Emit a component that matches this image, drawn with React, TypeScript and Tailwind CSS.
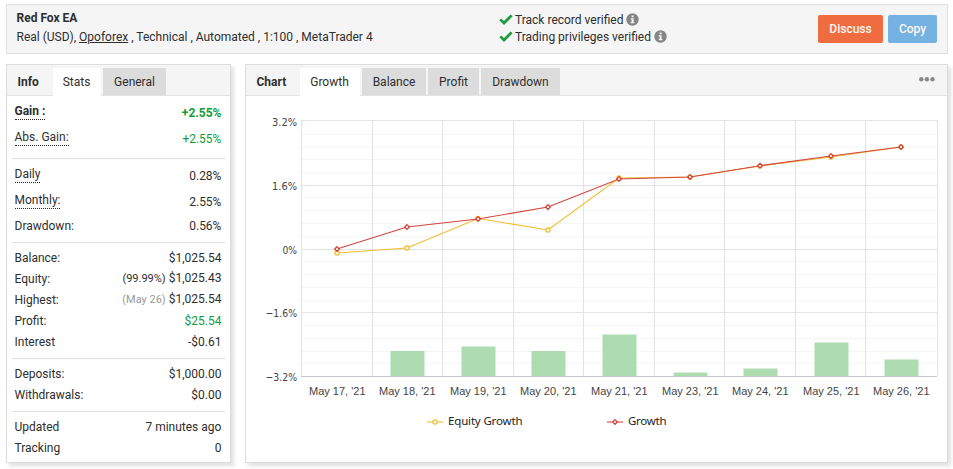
import React, { useState } from "react";
import clsx from "clsx";

interface StatRow {
  label: string;
  value: string;
  note?: string;
  noteClass?: string;
  labelClass?: string;
  valueClass?: string;
  hint?: boolean;
  height?: string;
}

interface StatGroup {
  className: string;
  rows: StatRow[];
}

const groups: StatGroup[] = [
  {
    className: "pt-1 pb-1.5",
    rows: [
      { label: "Gain :", value: "+2.55%", hint: true, height: "h-[26px]", labelClass: "font-bold", valueClass: "font-bold text-[#0f9d3a]" },
      { label: "Abs. Gain:", value: "+2.55%", hint: true, height: "h-[26px]", valueClass: "text-[#0f9d3a]" },
    ],
  },
  {
    className: "border-t pt-1 pb-[5px]",
    rows: [
      { label: "Daily", value: "0.28%", hint: true, height: "h-[26px]" },
      { label: "Monthly:", value: "2.55%", hint: true, height: "h-[26px]" },
      { label: "Drawdown:", value: "0.56%", height: "h-[22px]" },
    ],
  },
  {
    className: "border-t pt-1 pb-1.5",
    rows: [
      { label: "Balance:", value: "$1,025.54" },
      { label: "Equity:", value: "$1,025.43", note: "(99.99%)" },
      { label: "Highest:", value: "$1,025.54", note: "(May 26)", noteClass: "text-[#999]" },
      { label: "Profit:", value: "$25.54", valueClass: "text-[#0f9d3a]" },
      { label: "Interest", value: "-$0.61" },
    ],
  },
  {
    className: "border-t pt-1 pb-1.5",
    rows: [
      { label: "Deposits:", value: "$1,000.00" },
      { label: "Withdrawals:", value: "$0.00" },
    ],
  },
  {
    className: "border-t pt-1",
    rows: [
      { label: "Updated", value: "7 minutes ago" },
      { label: "Tracking", value: "0" },
    ],
  },
];

const points = [
  { date: "May 17, '21", x: 337, growth: 249, equity: 253, bar: 0 },
  { date: "May 18, '21", x: 407, growth: 227, equity: 248, bar: 351 },
  { date: "May 19, '21", x: 478, growth: 219, equity: 218.5, bar: 346.5 },
  { date: "May 20, '21", x: 548, growth: 207, equity: 230, bar: 351 },
  { date: "May 21, '21", x: 619, growth: 179, equity: 178, bar: 334.5 },
  { date: "May 23, '21", x: 690, growth: 177, equity: 177, bar: 372.5 },
  { date: "May 24, '21", x: 760, growth: 165.7, equity: 166, bar: 368.5 },
  { date: "May 25, '21", x: 831, growth: 156, equity: 157, bar: 342.5 },
  { date: "May 26, '21", x: 901, growth: 147, equity: 147, bar: 359.5 },
];

const columns = [301.5, 372.5, 442.5, 513.5, 583.5, 654.5, 724.5, 795.5, 865.5, 937.5];
const minorLines = [134.5, 147.5, 159.5, 172.5, 197.5, 210.5, 223.5, 236.5, 261.5, 274.5, 287.5, 300.5, 325.5, 338.5, 351.5, 363.5];
const majorLines = [
  { y: 120.5, label: "3.2%" },
  { y: 185.5, label: "1.6%" },
  { y: 249.5, label: "0%" },
  { y: 312.5, label: "−1.6%" },
  { y: 376.5, label: "−3.2%" },
];

function CheckMark() {
  return (
    <svg width="14" height="11" viewBox="0 0 14 11" className="mr-[2px] shrink-0">
      <path d="M1.3 5.4 L5 9 L12.6 1.4" fill="none" stroke="#1a9c3f" strokeWidth="2.7" />
    </svg>
  );
}

function InfoIcon() {
  return (
    <svg width="13" height="13" viewBox="0 0 13 13" className="ml-[3px] shrink-0">
      <circle cx="6.5" cy="6.5" r="6.2" fill="#858585" />
      <path d="M5.6 2.4h2v1.8h-2zM4.7 5.2h2.9v3.7h.8v1.3H4.7V8.9h.9V6.5h-.9z" fill="#f5f5f5" />
    </svg>
  );
}

interface TabsProps {
  title: string;
  titleClass: string;
  tabs: { name: string; width: string }[];
}

function Tabs({ title, titleClass, tabs }: TabsProps) {
  const [active, setActive] = useState<string>(tabs[0].name);

  return (
    <div className="flex h-full items-end gap-[2px]">
      <span className={clsx("h-[27px] pl-[10.5px] font-bold leading-[28px]", titleClass)}>{title}</span>
      {tabs.map((tab) => (
        <button
          key={tab.name}
          onClick={() => setActive(tab.name)}
          className={clsx(
            "text-center whitespace-nowrap",
            tab.width,
            active === tab.name
              ? "relative -mb-px h-[28px] bg-white pr-px leading-[28px]"
              : "h-[27px] bg-[#dcdcdc] leading-[28px]"
          )}
        >
          {tab.name}
        </button>
      ))}
    </div>
  );
}

function GrowthChart() {
  return (
    <svg width="701" height="365" viewBox="246 96 701 365" className="block">
      {minorLines.map((y) => (
        <path key={y} d={`M302 ${y}H937`} stroke="#f5f5f5" />
      ))}
      {majorLines.map((line) => (
        <path key={line.y} d={`M302 ${line.y}H937`} stroke="#e3e3e3" />
      ))}
      {columns.map((x) => (
        <path key={x} d={`M${x} 120V376`} stroke="#e3e3e3" />
      ))}

      {/* Bars */}
      {points.filter((p) => p.bar > 0).map((p) => (
        <rect key={p.date} x={p.x - 16.5} y={p.bar} width="34" height={376 - p.bar} fill="#addcb0" />
      ))}
      <path d="M301 376.5H937" stroke="#c4c8d0" />

      {/* Equity series */}
      <polyline points={points.map((p) => `${p.x},${p.equity}`).join(" ")} fill="none" stroke="#f1bd2e" strokeWidth="1.1" />
      {points.map((p) => (
        <circle key={p.date} cx={p.x} cy={p.equity} r="2.1" fill="#fff" stroke="#f1bd2e" strokeWidth="1.2" />
      ))}

      {/* Growth series */}
      <polyline points={points.map((p) => `${p.x},${p.growth}`).join(" ")} fill="none" stroke="#d2453f" strokeWidth="1.1" />
      {points.map((p) => (
        <path key={p.date} d={`M${p.x} ${p.growth - 2.3}l2.3 2.3l-2.3 2.3l-2.3 -2.3z`} fill="#fff" stroke="#d93a30" strokeWidth="1.2" />
      ))}

      {/* Axis labels */}
      <g fill="#444" fontSize="11" fontFamily="'DejaVu Sans', sans-serif" textAnchor="end">
        {majorLines.map((line) => (
          <text key={line.label} x="297" y={line.y + (line.y === 120.5 ? 5.5 : 4)} textLength={line.label.length === 5 ? 31.5 : line.label.length === 4 ? 25 : 14.5} lengthAdjust="spacingAndGlyphs">
            {line.label}
          </text>
        ))}
      </g>
      <g fill="#444" fontSize="11" fontFamily="'Liberation Sans', sans-serif" textAnchor="middle">
        {points.map((p) => (
          <text key={p.date} x={p.x + 0.3} y="395" textLength="56.5">{p.date}</text>
        ))}
      </g>

      {/* Legend */}
      <path d="M427 422H443" stroke="#f1bd2e" strokeWidth="1.1" />
      <circle cx="435" cy="422" r="2.1" fill="#fff" stroke="#f1bd2e" strokeWidth="1.2" />
      <path d="M607 422H623" stroke="#d2453f" strokeWidth="1.1" />
      <path d="M615 419.7l2.3 2.3l-2.3 2.3l-2.3 -2.3z" fill="#fff" stroke="#d93a30" strokeWidth="1.2" />
      <g fill="#222" fontSize="11.5" fontFamily="'Noto Sans', sans-serif">
        <text x="448" y="425" textLength="74.5">Equity Growth</text>
        <text x="628" y="425" textLength="38.5">Growth</text>
      </g>
    </svg>
  );
}

export default function App() {
  return (
    <div className="h-[469px] w-[953px] overflow-hidden bg-white pt-1 pl-1.5 font-[Roboto,sans-serif] text-[12px] text-[#2e2e2e]">
      {/* Header */}
      <header className="flex h-[50px] w-[942px] border border-[#e0e0e0] bg-[#f5f5f5]">
        <div className="w-[492px] pt-[4px] pl-[9.5px]">
          <h1 className="h-[18px] font-bold leading-[18px]">Red Fox EA</h1>
          <p className="leading-[20px] whitespace-nowrap">
            Real (USD), <a className="underline">Opoforex</a> , Technical , Automated , 1:100 , MetaTrader 4
          </p>
        </div>
        <div className="flex-1 pt-[6px]">
          <div className="flex h-[17px] items-center">
            <CheckMark />
            <span>Track record verified</span>
            <InfoIcon />
          </div>
          <div className="flex h-[17px] items-center">
            <CheckMark />
            <span>Trading privileges verified</span>
            <InfoIcon />
          </div>
        </div>
        <div className="flex gap-[5px] pt-[10px] pr-[10px] font-medium text-[#fff8f4]">
          <button className="h-7 w-[65px] rounded-[2px] bg-[#ee6c40]">Discuss</button>
          <button className="h-7 w-[49px] rounded-[2px] bg-[#74b2e2]">Copy</button>
        </div>
      </header>

      <div className="mt-[10px] flex gap-[14px]">
        {/* Info */}
        <section className="h-[399px] w-[225px] border border-[#dcdcdc] bg-white shadow-[3px_3px_4px_rgba(0,0,0,0.12)]">
          <div className="h-[31px] border-b border-[#e4e4e4] bg-[#f5f5f5]">
            <Tabs
              title="Info"
              titleClass="w-[44px]"
              tabs={[
                { name: "Stats", width: "w-[48px]" },
                { name: "General", width: "w-[63px]" },
              ]}
            />
          </div>
          <div className="px-[5px]">
            {groups.map((group, i) => (
              <div key={i} className={clsx("border-[#e0e0e0]", group.className)}>
                {group.rows.map((row) => (
                  <div key={row.label} className={clsx("flex items-center justify-between pr-[3.6px] pl-[2.5px]", row.height || "h-[21px]")}>
                    <span className={clsx(row.labelClass, row.hint && "mb-[3px] border-b border-dotted border-[#222] leading-[15px]")}>
                      {row.label}
                    </span>
                    <span className={row.valueClass}>
                      {row.note && <span className={clsx("mr-[3px] text-[11px]", row.noteClass)}>{row.note}</span>}
                      {row.value}
                    </span>
                  </div>
                ))}
              </div>
            ))}
          </div>
        </section>

        {/* Chart */}
        <section className="h-[399px] w-[703px] border border-[#dcdcdc] bg-white shadow-[3px_3px_4px_rgba(0,0,0,0.12)]">
          <div className="flex h-[31px] justify-between border-b border-[#e4e4e4] bg-[#f5f5f5]">
            <Tabs
              title="Chart"
              titleClass="w-[52px]"
              tabs={[
                { name: "Growth", width: "w-[60px]" },
                { name: "Balance", width: "w-[64px]" },
                { name: "Profit", width: "w-[51px]" },
                { name: "Drawdown", width: "w-[79px]" },
              ]}
            />
            <svg width="16" height="5" viewBox="0 0 16 5" className="mt-3 mr-[12px]" fill="#888">
              <circle cx="2.3" cy="2.3" r="2.2" />
              <circle cx="7.9" cy="2.3" r="2.2" />
              <circle cx="13.5" cy="2.3" r="2.2" />
            </svg>
          </div>
          <GrowthChart />
        </section>
      </div>
    </div>
  );
}
